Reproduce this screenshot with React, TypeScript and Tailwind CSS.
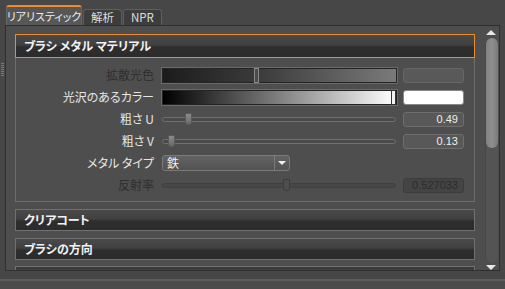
import React from 'react'

const jp = "font-['Noto_Sans_CJK_JP','Noto_Sans',sans-serif] [font-feature-settings:'palt']"

function Tab({ label, active }: { label: string; active?: boolean }) {
  if (active) {
    return (
      <div className="h-[20px] w-[76px] rounded-t-[3px] border-t-2 border-x border-t-[#ee8a2a] border-x-[#666] bg-[#575757] flex items-center justify-center whitespace-nowrap text-[11px] text-[#eeeeee] leading-none">
        {label}
      </div>
    )
  }
  return (
    <div className="mt-[4px] h-[16px] rounded-t-[3px] border-t border-x border-[#5e5e5e] bg-[#3d3d3d] px-[7px] flex items-center whitespace-nowrap text-[11.5px] text-[#dddddd] leading-none">
      {label}
    </div>
  )
}

function SectionHeader({ title, active }: { title: string; active?: boolean }) {
  return (
    <div
      className={`shrink-0 w-[460px] flex items-center pl-[8px] text-[12px] font-bold text-[#f2f2f2] leading-none bg-[linear-gradient(to_bottom,#4a4a4a_0%,#404040_45%,#2e2e2e_55%,#2b2b2b_100%)] ${
        active ? 'h-[24px] border border-[#ec8a2c]' : 'h-[22px] border border-[#707070]'
      }`}
    >
      {title}
    </div>
  )
}

function Row({ label, dim, children }: { label: string; dim?: boolean; children: React.ReactNode }) {
  return (
    <div className="h-[22px] shrink-0 flex items-center">
      <div className={`w-[138px] text-right text-[12px] leading-none whitespace-nowrap ${dim ? 'text-[#2e2e2e]' : 'text-[#e6e6e6]'}`}>
        {label}
      </div>
      <div className="ml-[8px] flex items-center">{children}</div>
    </div>
  )
}

function Slider({ pos, dim }: { pos: number; dim?: boolean }) {
  return (
    <div className="relative w-[235px] h-[12px] flex items-center">
      <div className={`w-[234px] h-[5px] rounded-full border ${dim ? 'border-[#404040] bg-[#474747]' : 'border-[#707070] bg-[#4a4a4a]'}`} />
      <div
        className={`absolute top-0 w-[7px] h-[12px] rounded-b-[3px] rounded-t-[1px] border ${
          dim ? 'border-[#3c3c3c] bg-[#4e4e4e]' : 'border-[#5a5a5a] bg-[linear-gradient(to_bottom,#8a8a8a,#6a6a6a)]'
        }`}
        style={{ left: pos }}
      />
    </div>
  )
}

function ValueBox({ value, dim }: { value: string; dim?: boolean }) {
  return (
    <div
      className={`ml-[6px] w-[61px] h-[15px] rounded-[3px] border flex items-center justify-end pr-[5px] text-[11px] font-['Liberation_Sans',sans-serif] leading-none ${
        dim ? 'border-[#3c3c3c] bg-[#444444] text-[#2c2c2c]' : 'border-[#6e6e6e] bg-[#585858] text-[#eeeeee]'
      }`}
    >
      {value}
    </div>
  )
}

function ScrollBar() {
  return (
    <div className="ml-[8px] w-[16px] shrink-0 flex flex-col items-center">
      <div className="h-[12px] shrink-0 flex items-center justify-center">
        <div className="w-0 h-0 border-x-[5px] border-x-transparent border-b-[5px] border-b-[#e8e8e8]" />
      </div>
      <div className="w-[13px] h-[225px] shrink-0 rounded-full bg-[#545454] border-l border-[#474747]">
        <div className="w-[12px] h-[110px] rounded-full bg-[linear-gradient(to_right,#828282,#8e8e8e_50%,#7a7a7a)]" />
      </div>
      <div className="h-[8px] shrink-0 flex items-center justify-center">
        <div className="w-0 h-0 border-x-[5px] border-x-transparent border-t-[5px] border-t-[#e8e8e8]" />
      </div>
    </div>
  )
}

export default function App() {
  return (
    <div className={`relative w-[505px] h-[289px] overflow-hidden bg-[#474747] ${jp}`}>
      {/* grip on the left edge */}
      <div className="absolute left-[1px] top-[63px] w-[3px] h-[13px] bg-[repeating-linear-gradient(to_bottom,#7a7a7a_0px,#7a7a7a_1px,transparent_1px,transparent_2px)]" />

      {/* tabs */}
      <div className="h-[25px] pt-[5px] pl-[6px] flex items-end gap-[1px]">
        <Tab label="リアリスティック" active />
        <Tab label="解析" />
        <Tab label="NPR" />
      </div>

      {/* panel */}
      <div className="ml-[5px] w-[495px] h-[246px] border border-[#2f2f2f] bg-[#4e4e4e] flex items-start overflow-hidden">
        <div className="pl-[9px] pt-[8px] flex flex-col shrink-0">
          <SectionHeader title="ブラシ メタル マテリアル" active />
          <div className="shrink-0 w-[460px] border-x border-b border-[#6e6e6e] pt-[6px] pb-[5px]">
            <Row label="拡散光色" dim>
              <div className="relative w-[235px] h-[15px] border border-[#242424] shadow-[0_0_0_1px_#6a6a6a] bg-[linear-gradient(to_right,#1c1c1c,#3a3a3a_40%,#7a7a7a)]">
                <div className="absolute left-[91px] top-[-1px] w-[5px] h-[15px] border border-[#8a8a8a] bg-[#4a4a4a]" />
              </div>
              <div className="ml-[6px] w-[61px] h-[15px] rounded-[3px] border border-[#666] bg-[#595959]" />
            </Row>
            <Row label="光沢のあるカラー">
              <div className="relative w-[235px] h-[15px] border border-[#242424] shadow-[0_0_0_1px_#6a6a6a] bg-[linear-gradient(to_right,#000000,#5a5a5a_35%,#ffffff)]">
                <div className="absolute right-[0px] top-[-1px] w-[5px] h-[15px] border border-[#333] bg-[#f4f4f4]" />
              </div>
              <div className="ml-[6px] w-[61px] h-[15px] rounded-[3px] border border-[#888] bg-white" />
            </Row>
            <Row label="粗さ U">
              <Slider pos={23} />
              <ValueBox value="0.49" />
            </Row>
            <Row label="粗さ V">
              <Slider pos={6} />
              <ValueBox value="0.13" />
            </Row>
            <Row label="メタル タイプ">
              <div className="w-[128px] h-[16px] rounded-[3px] border border-[#7a7a7a] bg-[linear-gradient(to_bottom,#636363,#525252)] flex items-center">
                <div className="flex-1 pl-[4px] text-[12px] text-[#f0f0f0] leading-none">鉄</div>
                <div className="w-[15px] h-full border-l border-[#7a7a7a] flex items-center justify-center">
                  <div className="w-0 h-0 border-x-[4px] border-x-transparent border-t-[4px] border-t-[#f0f0f0]" />
                </div>
              </div>
            </Row>
            <Row label="反射率" dim>
              <Slider pos={121} dim />
              <ValueBox value="0.527033" dim />
            </Row>
          </div>

          <div className="mt-[7px] shrink-0">
            <SectionHeader title="クリアコート" />
          </div>
          <div className="mt-[7px] shrink-0">
            <SectionHeader title="ブラシの方向" />
          </div>
          <div className="mt-[6px] shrink-0 w-[460px] h-[20px] border-x border-t border-[#707070] bg-[#3c3c3c]" />
        </div>
        <ScrollBar />
      </div>

      {/* bottom strip */}
      <div className="mt-[8px] h-[2px] bg-[#5c5c5c]" />
      <div className="h-[10px] bg-[#4b4b4b]" />
    </div>
  )
}
